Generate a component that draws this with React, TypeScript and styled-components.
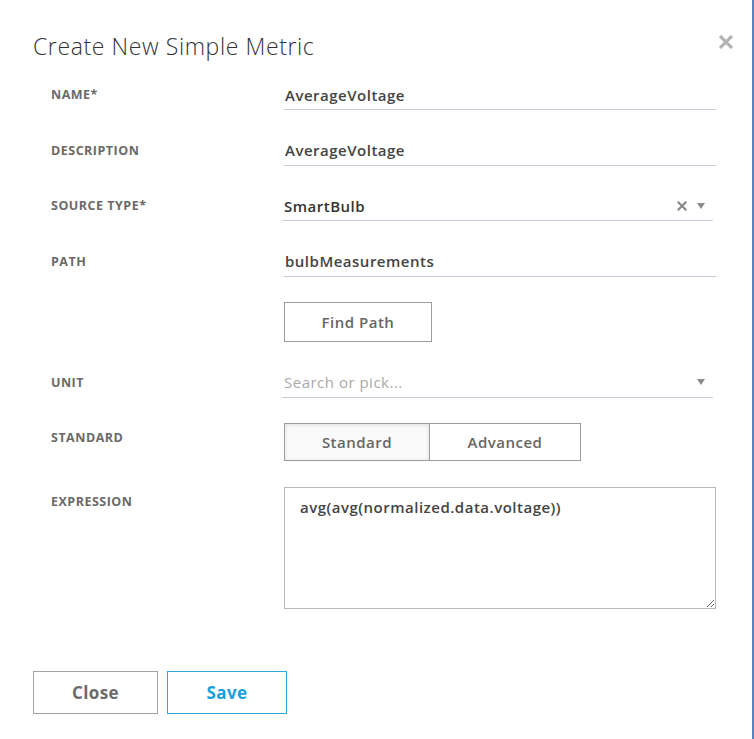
import { useState } from "react";
import styled, { createGlobalStyle } from "styled-components";

const GlobalStyle = createGlobalStyle`
    body {
        margin: 0;
        background: #fff;
        font-family: "Open Sans", "Liberation Sans", sans-serif;
    }
`

const Dialog = styled.div`
    width: 754px;
    height: 739px;
    box-sizing: border-box;
    border-right: 2px solid #5583c0;
    padding: 31px 0 0 33px;
    background: #fff;
`

const Header = styled.div`
    display: flex;
    justify-content: space-between;
    align-items: flex-start;
    padding-right: 19px;
`

const Title = styled.h1`
    margin: 0;
    font-size: 23px;
    line-height: 30px;
    font-weight: 300;
    letter-spacing: 0.6px;
    color: #333;
`

const CloseIcon = styled.button`
    border: none;
    background: none;
    padding: 0;
    margin-top: 4px;
    width: 14px;
    height: 14px;
    cursor: pointer;
    display: flex;
`

const Form = styled.div`
    display: grid;
    grid-template-columns: 233px 432px;
    row-gap: 25.5px;
    margin: 19px 0 0 18px;
    align-items: start;
`

const Label = styled.div`
    font-size: 12.5px;
    line-height: 29px;
    font-weight: 700;
    letter-spacing: 0.5px;
    color: #6a6a6a;
    text-transform: uppercase;
`

const TextInput = styled.input`
    box-sizing: border-box;
    width: 432px;
    height: 30px;
    padding: 0 1px;
    border: none;
    border-bottom: 1px solid #c6cfda;
    outline: none;
    font-family: inherit;
    font-size: 15px;
    font-weight: 600;
    letter-spacing: 0.5px;
    color: #444;
    background: transparent;
`

const Select = styled.div`
    box-sizing: border-box;
    width: 431px;
    height: 30px;
    margin-left: -2px;
    padding: 0 8px 0 2px;
    display: flex;
    align-items: center;
    border-bottom: 1px solid #c6cfda;
`

const SelectValue = styled.span<{ $placeholder?: boolean }>`
    flex: 1;
    font-size: 15px;
    letter-spacing: 0.5px;
    font-weight: ${p => (p.$placeholder ? 400 : 600)};
    color: ${p => (p.$placeholder ? "#a9a9a9" : "#333")};
`

const SelectIcons = styled.div`
    display: flex;
    align-items: center;
    gap: 10px;
`

const OutlineButton = styled.button<{ $w: number; $h: number }>`
    width: ${p => p.$w}px;
    height: ${p => p.$h}px;
    box-sizing: border-box;
    border: 1px solid #9c9c9c;
    background: #fff;
    font-family: inherit;
    font-size: 15px;
    font-weight: 600;
    letter-spacing: 0.5px;
    color: #666;
    cursor: pointer;
`

const Toggle = styled.div`
    display: flex;
    width: 297px;
    height: 38px;
    box-sizing: border-box;
    border: 1px solid #9c9c9c;
`

const ToggleOption = styled.button<{ $active: boolean; $w: number }>`
    width: ${p => p.$w}px;
    height: 100%;
    border: none;
    border-left: ${p => (p.$active ? "none" : "1px solid #9c9c9c")};
    background: ${p => (p.$active ? "#fafafa" : "#fff")};
    box-shadow: ${p => (p.$active ? "inset 0 1px 4px rgba(0,0,0,0.12)" : "none")};
    font-family: inherit;
    font-size: 15px;
    font-weight: 600;
    letter-spacing: 0.5px;
    color: #666;
    cursor: pointer;
`

const Expression = styled.textarea`
    box-sizing: border-box;
    width: 432px;
    height: 122px;
    padding: 9px 15px;
    border: 1px solid #b9b9b9;
    outline: none;
    font-family: inherit;
    font-size: 15px;
    line-height: 20px;
    font-weight: 600;
    letter-spacing: 0.5px;
    color: #444;
    resize: both;
`

const Footer = styled.div`
    display: flex;
    gap: 9px;
    margin-top: 62px;
`

const FooterButton = styled.button<{ $primary?: boolean; $w: number }>`
    width: ${p => p.$w}px;
    height: 43px;
    box-sizing: border-box;
    border: 1.5px solid ${p => (p.$primary ? "#2ea6de" : "#a3a3a3")};
    background: #fff;
    font-family: inherit;
    font-size: 17px;
    font-weight: 700;
    letter-spacing: 0.4px;
    color: ${p => (p.$primary ? "#1a9fdb" : "#6b6b6b")};
    cursor: pointer;
`

const Cross = ({ size, color }: { size: number; color: string }) => (
    <svg width={size} height={size} viewBox="0 0 10 10">
        <path d="M1.5 1.5 L8.5 8.5 M8.5 1.5 L1.5 8.5" stroke={color} strokeWidth="2.2" strokeLinecap="square" />
    </svg>
)

const Caret = () => (
    <svg width="8" height="6" viewBox="0 0 8 6">
        <path d="M0 0 H8 L4 6 Z" fill="#8a8a8a" />
    </svg>
)

export default function App(){
    const [mode, setMode] = useState<"standard" | "advanced">("standard");

    return (
        <>
            <GlobalStyle/>
            <Dialog>
                <Header>
                    <Title>Create New Simple Metric</Title>
                    <CloseIcon aria-label="close"><Cross size={14} color="#b3b3b3"/></CloseIcon>
                </Header>
                <Form>
                    <Label>Name*</Label>
                    <TextInput defaultValue="AverageVoltage"/>

                    <Label>Description</Label>
                    <TextInput defaultValue="AverageVoltage"/>

                    <Label>Source Type*</Label>
                    <Select>
                        <SelectValue>SmartBulb</SelectValue>
                        <SelectIcons>
                            <Cross size={10} color="#8a8a8a"/>
                            <Caret/>
                        </SelectIcons>
                    </Select>

                    <Label>Path</Label>
                    <TextInput defaultValue="bulbMeasurements"/>

                    <div/>
                    <OutlineButton $w={148} $h={40}>Find Path</OutlineButton>

                    <Label>Unit</Label>
                    <Select>
                        <SelectValue $placeholder>Search or pick...</SelectValue>
                        <SelectIcons>
                            <Caret/>
                        </SelectIcons>
                    </Select>

                    <Label>Standard</Label>
                    <Toggle>
                        <ToggleOption $w={145} $active={mode === "standard"} onClick={() => setMode("standard")}>Standard</ToggleOption>
                        <ToggleOption $w={152} $active={mode === "advanced"} onClick={() => setMode("advanced")}>Advanced</ToggleOption>
                    </Toggle>

                    <Label>Expression</Label>
                    <Expression defaultValue="avg(avg(normalized.data.voltage))"/>
                </Form>
                <Footer>
                    <FooterButton $w={125}>Close</FooterButton>
                    <FooterButton $w={120} $primary>Save</FooterButton>
                </Footer>
            </Dialog>
        </>
    );
}
